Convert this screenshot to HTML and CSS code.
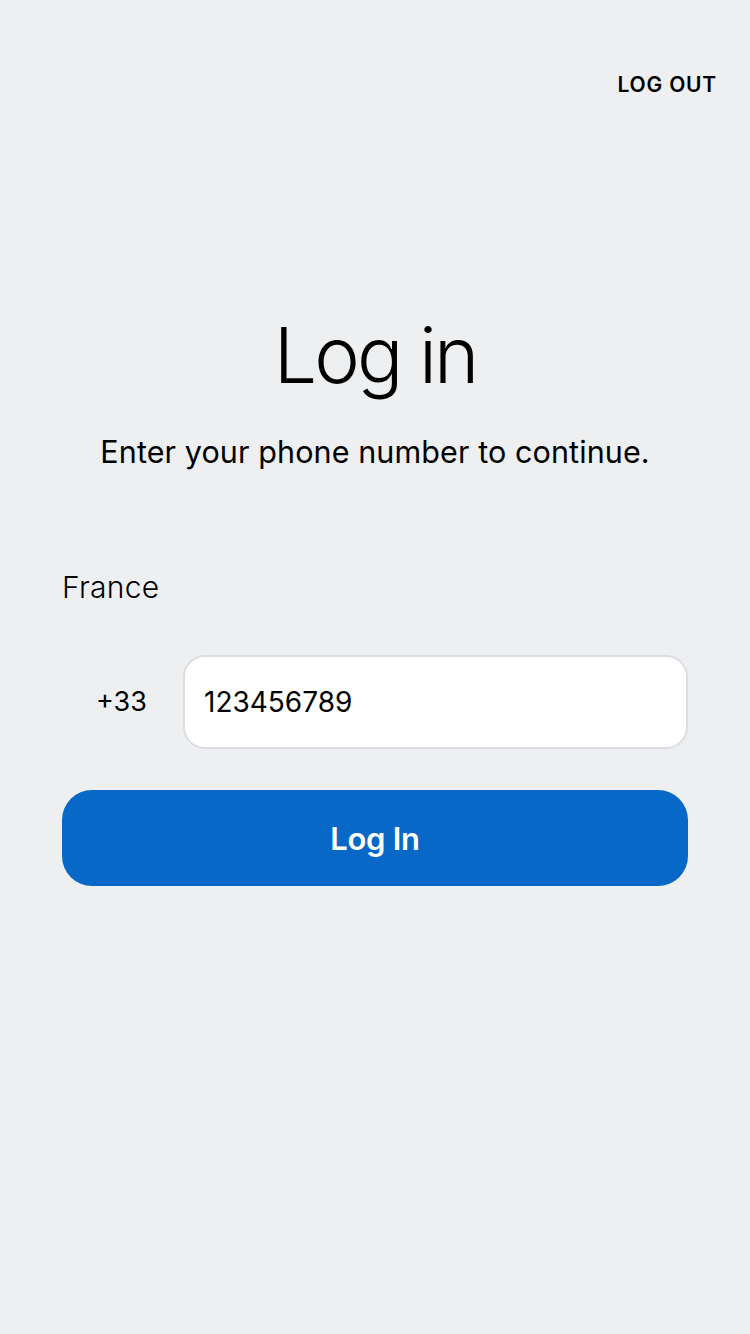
FILE: index.html
```html
<!DOCTYPE html>
<html>
<head>
<meta charset="utf-8">
<link rel="stylesheet" href="styles.css">
</head>
<body>
<div class="screen">
  <header class="topbar">
    <span class="logout">LOG OUT</span>
  </header>
  <main class="content">
    <h1 class="title">Log in</h1>
    <p class="subtitle">Enter your phone number to continue.</p>
    <div class="country">France</div>
    <div class="phone-row">
      <span class="code">+33</span>
      <div class="input">123456789</div>
    </div>
    <div class="button">Log In</div>
  </main>
</div>
</body>
</html>
```
FILE: styles.css
```css
* { box-sizing: border-box; }
html, body {
  margin: 0;
  padding: 0;
  background: #eeeff1;
}
body {
  font-family: Inter, "Noto Sans", sans-serif;
  color: #000;
}
.screen {
  width: 750px;
  height: 1334px;
  display: flex;
  flex-direction: column;
}
.topbar {
  display: flex;
  justify-content: flex-end;
  padding: 72px 33px 0 0;
  height: 112px;
}
.logout {
  font-size: 21px;
  font-weight: 600;
  letter-spacing: 0.8px;
  line-height: 26px;
}
.content {
  display: flex;
  flex-direction: column;
  padding: 0 62px;
}
.title {
  margin: 195px 0 0;
  text-align: center;
  font-size: 77px;
  font-weight: 300;
  line-height: 96px;
  letter-spacing: -3px;
}
.subtitle {
  margin: 29px 0 0;
  text-align: center;
  font-size: 30.5px;
  font-weight: 400;
  line-height: 40px;
  letter-spacing: 0.1px;
}
.country {
  margin-top: 95px;
  font-size: 30px;
  font-weight: 300;
  line-height: 40px;
  letter-spacing: 0.3px;
}
.phone-row {
  margin-top: 48px;
  display: flex;
  align-items: center;
}
.code {
  width: 121px;
  padding-left: 34px;
  font-size: 27px;
  line-height: 34px;
}
.input {
  flex: 1;
  height: 94px;
  background: #fff;
  border: 2px solid #dcdde0;
  border-radius: 22px;
  display: flex;
  align-items: center;
  padding-left: 19px;
  font-size: 28px;
}
.button {
  margin-top: 41px;
  height: 96px;
  background: #0868c8;
  border-radius: 30px;
  color: #fff;
  display: flex;
  align-items: center;
  justify-content: center;
  font-size: 31px;
  font-weight: 600;
  letter-spacing: -0.3px;
}
```
